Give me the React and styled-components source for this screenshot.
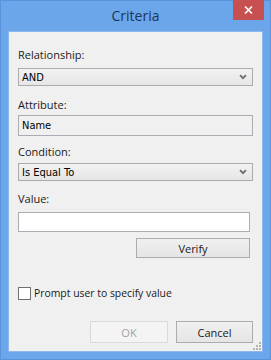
import React from 'react';
import styled, { createGlobalStyle } from 'styled-components';

const Global = createGlobalStyle`
  html, body { margin: 0; padding: 0; background: #6ba6ea; }
  * { box-sizing: border-box; }
`

const Window = styled.div`
  width: 271px;
  height: 360px;
  background: #6ba6ea;
  border: 1px solid #5a93dc;
  display: flex;
  flex-direction: column;
  font-family: "Open Sans", "Noto Sans", sans-serif;
`

const TitleBar = styled.div`
  height: 30px;
  display: grid;
  grid-template-columns: 1fr auto 1fr;
  align-items: start;
`

const Title = styled.div`
  grid-column: 2;
  font-size: 14px;
  line-height: 30px;
  color: #1c3556;
`

const Close = styled.div`
  grid-column: 3;
  justify-self: end;
  margin-right: 6px;
  margin-top: -1px;
  width: 31px;
  height: 20px;
  background: #c75050;
  display: flex;
  align-items: center;
  justify-content: center;
`

const Client = styled.div`
  position: relative;
  margin: 0 7px 7px;
  flex: 1;
  background: #f0f0f0;
  border: 1px solid #8cb8ee;
  padding: 15px 9px 0;
  display: flex;
  flex-direction: column;
`

const Label = styled.div`
  font-size: 11px;
  line-height: 16px;
  color: #1a1a1a;
  margin-top: ${p => p.$mt || 0}px;
`

const Combo = styled.div`
  margin-top: ${p => p.$mt || 0}px;
  height: 18px;
  border: 1px solid #acacac;
  background: linear-gradient(#f2f2f2, #e6e6e6);
  display: flex;
  align-items: center;
  justify-content: space-between;
  padding: 0 5px 0 3px;
`

const FieldText = styled.span`
  font-family: "DejaVu Sans Condensed", "Liberation Sans", sans-serif;
  font-size: 11px;
  color: #000;
`

const TextBox = styled.div`
  margin-top: ${p => p.$mt || 0}px;
  margin-right: ${p => p.$mr || 0}px;
  height: ${p => p.$h || 21}px;
  border: 1px solid #abadb3;
  background: ${p => (p.$readOnly ? '#f0f0f0' : '#fff')};
  display: flex;
  align-items: center;
  padding: 0 3px;
`

const ButtonRow = styled.div`
  margin-top: ${p => p.$mt || 0}px;
  margin-right: ${p => p.$mr || 0}px;
  display: flex;
  justify-content: flex-end;
  gap: 8px;
`

const Button = styled.div`
  width: ${p => p.$w}px;
  height: ${p => p.$h}px;
  border: 1px solid ${p => (p.$disabled ? '#d9d9d9' : '#acacac')};
  background: ${p => (p.$disabled ? '#f4f4f4' : 'linear-gradient(#f0f0f0, #e5e5e5)')};
  color: ${p => (p.$disabled ? '#a3a3a3' : '#1a1a1a')};
  font-size: 11px;
  display: flex;
  align-items: center;
  justify-content: center;
`

const CheckRow = styled.label`
  margin-top: 28px;
  display: flex;
  align-items: center;
  gap: 3px;
  font-size: 10.4px;
  color: #1a1a1a;
`

const Box = styled.span`
  width: 13px;
  height: 13px;
  border: 1px solid #707070;
  background: #fff;
`

const Grip = styled.svg`
  position: absolute;
  right: 1px;
  bottom: 1px;
`

const Chevron = () => (
  <svg width="8" height="6" viewBox="0 0 8 6">
    <path d="M1 1.2 L4 4.2 L7 1.2" fill="none" stroke="#6d6d6d" strokeWidth="1.8" />
  </svg>
)

export default function App() {
  return (
    <>
      <Global />
      <Window>
        <TitleBar>
          <Title>Criteria</Title>
          <Close>
            <svg width="9" height="8" viewBox="0 0 9 8">
              <path d="M1 0.5 L8 7.5 M8 0.5 L1 7.5" stroke="#fff" strokeWidth="1.6" />
            </svg>
          </Close>
        </TitleBar>
        <Client>
          <Label>Relationship:</Label>
          <Combo $mt={5}>
            <FieldText>AND</FieldText>
            <Chevron />
          </Combo>
          <Label $mt={11}>Attribute:</Label>
          <TextBox $mt={2} $readOnly>
            <FieldText>Name</FieldText>
          </TextBox>
          <Label $mt={8}>Condition:</Label>
          <Combo $mt={3}>
            <FieldText>Is Equal To</FieldText>
            <Chevron />
          </Combo>
          <Label $mt={10}>Value:</Label>
          <TextBox $mt={5} $mr={3} $h={20} />
          <ButtonRow $mt={6} $mr={3}>
            <Button $w={114} $h={20}>Verify</Button>
          </ButtonRow>
          <CheckRow>
            <Box />
            Prompt user to specify value
          </CheckRow>
          <ButtonRow $mt={21}>
            <Button $w={78} $h={22} $disabled>OK</Button>
            <Button $w={77} $h={22}>Cancel</Button>
          </ButtonRow>
          <Grip width="8" height="8" viewBox="0 0 8 8">
            <g fill="#b4b4b4">
              <rect x="6" y="0" width="2" height="2" />
              <rect x="3" y="3" width="2" height="2" />
              <rect x="6" y="3" width="2" height="2" />
              <rect x="0" y="6" width="2" height="2" />
              <rect x="3" y="6" width="2" height="2" />
              <rect x="6" y="6" width="2" height="2" />
            </g>
          </Grip>
        </Client>
      </Window>
    </>
  )
}
